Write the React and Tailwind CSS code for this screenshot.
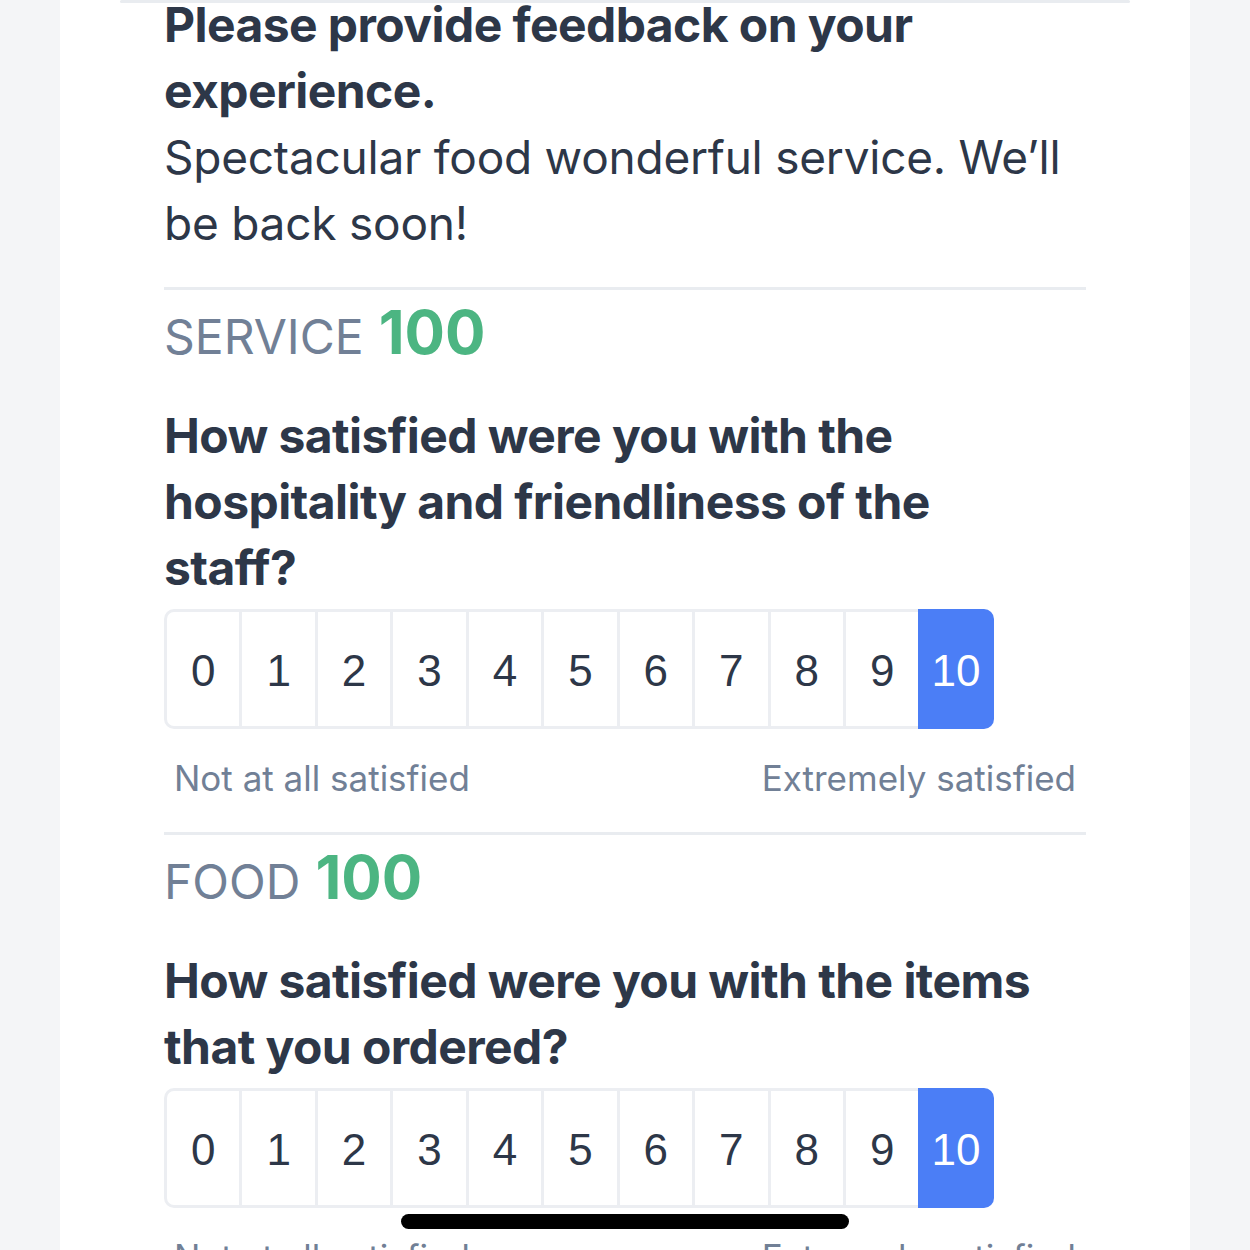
import React from "react";

// Rating row: 0..10 boxes, the selected one filled blue
function Scale({ value }) {
  const nums = Array.from({ length: 11 }, (_, i) => i);
  return (
    <div className="flex w-[830px]">
      {nums.map((n) => {
        const active = n === value;
        return (
          <div
            key={n}
            className={`flex h-[120px] w-[75.45px] items-center justify-center pt-[4px] text-[44px] ${
              active
                ? "rounded-r-[10px] bg-[#4b7ef6] text-white"
                : "border-y-[3px] border-l-[3px] border-[#eceef2] bg-white text-[#2d3748]"
            } ${n === 0 ? "rounded-l-[10px]" : ""}`}
            style={{ fontFamily: '"Liberation Sans", Arial, sans-serif' }}
          >
            {n}
          </div>
        );
      })}
    </div>
  );
}

// One question block: category header, question, scale and its two labels
function Section({ title, score, question }) {
  return (
    <div>
      <div className="h-[3px] bg-[#e9ecf0]" />
      <div className="flex h-[80px] items-baseline gap-[15px] pt-[9px] leading-[66px]">
        <span className="text-[48px] text-[#718096]">{title}</span>
        <span className="text-[60px] font-bold text-[#4cb582]">{score}</span>
      </div>
      <h2 className="mt-[33px] max-w-[885px] text-[48px] font-bold leading-[66px] tracking-[-0.012em] text-[#2d3748]">
        {question}
      </h2>
      <div className="mt-[8px]">
        <Scale value={10} />
      </div>
      <div className="mt-[25px] mb-[30px] flex justify-between px-[10px] text-[35px] leading-[48px] text-[#718096]">
        <span>Not at all satisfied</span>
        <span>Extremely satisfied</span>
      </div>
    </div>
  );
}

export default function App() {
  return (
    <div
      className="min-h-[1250px] h-[1250px] overflow-hidden bg-[#f4f5f7]"
      style={{ fontFamily: 'Inter, "Noto Sans", sans-serif' }}
    >
      <div className="mx-[60px] h-full bg-white">
        <div className="mx-[60px] h-[3px] rounded-full bg-[#e9ecf0]" />
        <div className="px-[104px]">
          <div className="-mt-[11px]">
            <h1 className="text-[48px] font-bold leading-[66px] tracking-[-0.012em] text-[#2d3748]">
              Please provide feedback on your experience.
            </h1>
            <p className="text-[46px] leading-[66px] tracking-[-0.005em] text-[#2d3748]">
              Spectacular food wonderful service. We’ll be back soon!
            </p>
          </div>
          <div className="mt-[31px]">
            <Section
              title="SERVICE"
              score="100"
              question="How satisfied were you with the hospitality and friendliness of the staff?"
            />
            <Section
              title="FOOD"
              score="100"
              question="How satisfied were you with the items that you ordered?"
            />
          </div>
        </div>
      </div>
      {/* iOS home indicator */}
      <div className="fixed left-[401px] top-[1214px] h-[15px] w-[448px] rounded-full bg-black" />
    </div>
  );
}
